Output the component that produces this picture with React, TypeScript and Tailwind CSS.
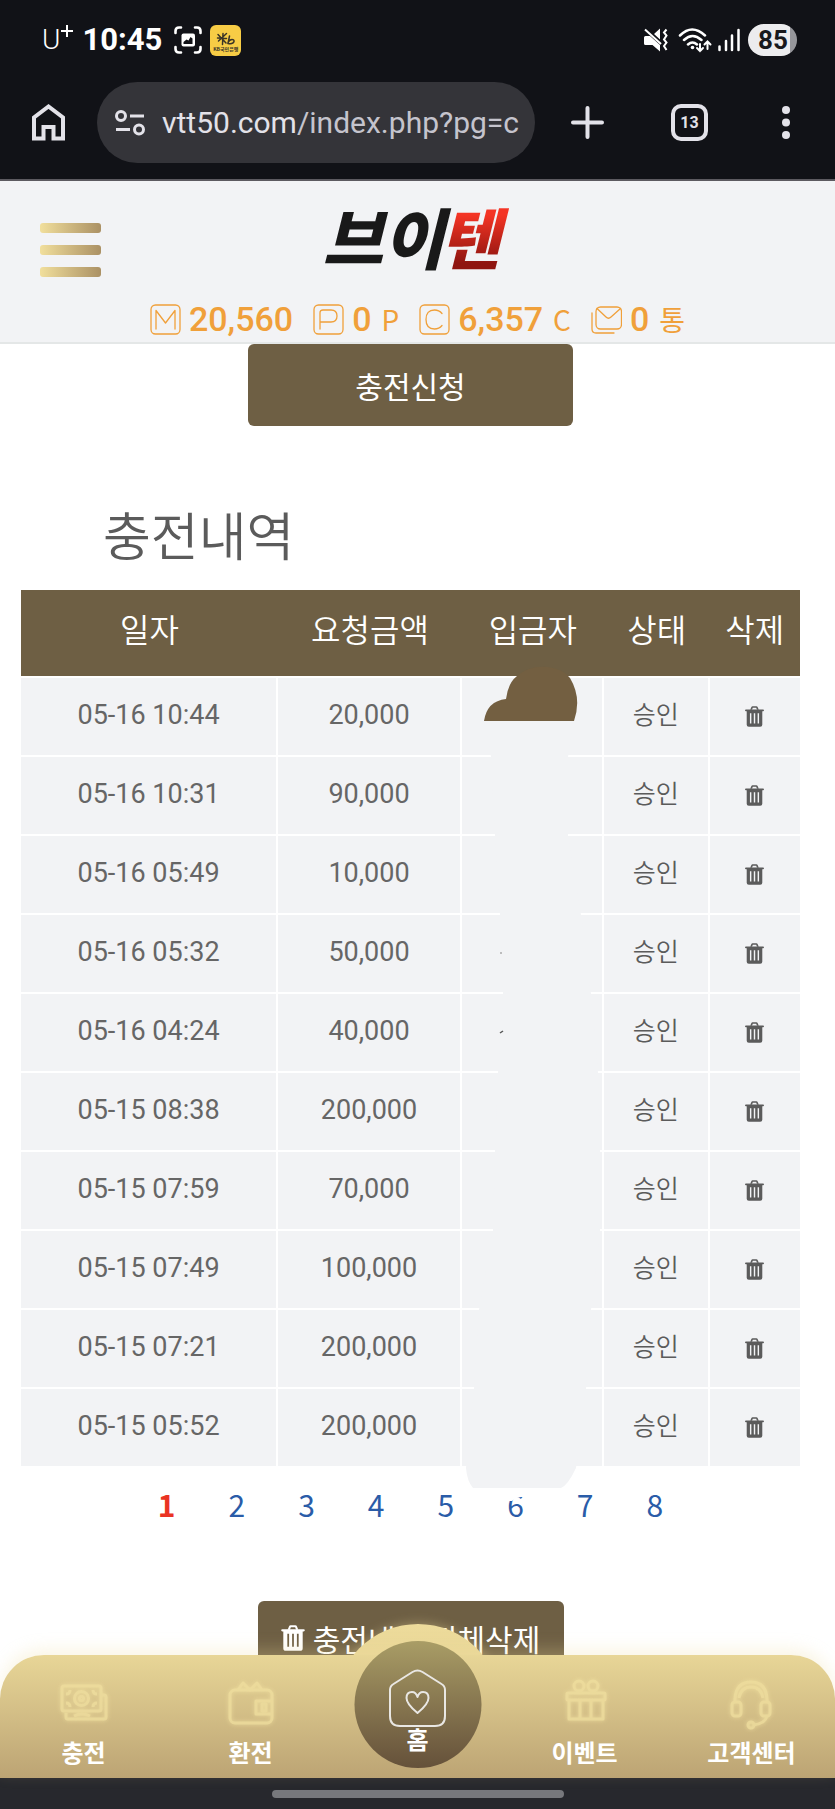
import { type ReactNode } from "react";

const rows = [
  { date: "05-16 10:44", amount: "20,000" },
  { date: "05-16 10:31", amount: "90,000" },
  { date: "05-16 05:49", amount: "10,000" },
  { date: "05-16 05:32", amount: "50,000" },
  { date: "05-16 04:24", amount: "40,000" },
  { date: "05-15 08:38", amount: "200,000" },
  { date: "05-15 07:59", amount: "70,000" },
  { date: "05-15 07:49", amount: "100,000" },
  { date: "05-15 07:21", amount: "200,000" },
  { date: "05-15 05:52", amount: "200,000" },
];

const pages = [1, 2, 3, 4, 5, 6, 7, 8];

const TrashIcon = ({ className }: { className: string }) => (
  <svg viewBox="0 0 20 22" className={className} fill="currentColor" aria-hidden="true">
    <path d="M5.500 4 6.600 1.200Q7 .3 8 .3h4q1 0 1.400.9L14.500 4h-1.900l-.8-2.100H8.200L7.400 4z" />
    <path d="M1 3.600h18q1 0 1 .9t-1 .9H1q-1 0-1-.9t1-.9z" />
    <path
      fillRule="evenodd"
      d="M1.800 5h16.400v14.600q0 2.200-2.200 2.200H4q-2.200 0-2.200-2.200zM5.200 7.500v10.800h1.500V7.500zm4.050 0v10.800h1.500V7.500zm4.050 0v10.800h1.500V7.500z"
    />
  </svg>
);

const StatusBar = () => (
  <div className="flex h-20 items-center pl-[42px] pr-[38px] text-white">
    <div className="flex items-start font-light">
      <span className="text-[28px] leading-8">U</span>
      <svg viewBox="0 0 14 14" className="size-[14px]" fill="none" stroke="currentColor" strokeWidth="2">
        <path d="M7 1v12M1 7h12" />
      </svg>
    </div>
    <span className="ml-2 text-[31px] font-bold leading-9">10:45</span>
    <svg viewBox="0 0 28 28" className="ml-3 size-7" fill="none" stroke="currentColor" strokeWidth="2.600" strokeLinecap="round">
      <path d="M1.500 7V5q0-3.500 3.500-3.500h2M21 1.500h2q3.500 0 3.500 3.500v2M26.500 21v2q0 3.500-3.500 3.500h-2M7 26.500H5q-3.500 0-3.500-3.500v-2" />
      <rect x="7.500" y="7.500" width="13.500" height="13" rx="2" fill="currentColor" stroke="none" />
      <path d="M9.500 18v-2l3-2.500 2 1 2-3.500 2 1.500V18z" fill="#111217" stroke="none" />
    </svg>
    <div className="ml-2 flex size-[31px] flex-col items-center justify-end rounded-md bg-[#f7cc45] pb-1 text-[#3a3427]">
      <svg viewBox="0 0 20 14" className="h-[14px] w-5" fill="none" stroke="currentColor" strokeWidth="1.500" strokeLinecap="round">
        <path d="M2 2.500 10 11M10.500 1.500 2.500 9M7 1.500 6.500 12.500M1.500 6l9 .5M13.500 4l-1.500 7.500q5 1 6-2 .3-2-2-2t-4 3" />
      </svg>
      <span className="font-['Noto_Sans_CJK_KR',sans-serif] text-[5px] leading-[6px] font-bold">KB국민은행</span>
    </div>
    <div className="ml-auto flex items-center">
      <svg viewBox="0 0 24 24" className="size-6" fill="currentColor">
        <path d="M0 9.500Q0 8 1.500 8H6l10 9v6.500L8.500 17h-7Q0 17 0 15.500zM10 6l6-5.500v11z" />
        <path d="M1 1.500 17 16" stroke="currentColor" strokeWidth="2" />
        <path d="m22.500 1.500-2.500 3 2.500 3-2.500 4 2.500 3-2.500 3.500 2.500 4" fill="none" stroke="currentColor" strokeWidth="2" />
      </svg>
      <svg viewBox="0 0 34 26" className="ml-[10px] h-[26px] w-[34px]" fill="none" stroke="currentColor" strokeWidth="2.500" strokeLinecap="round">
        <path d="M2 8.500Q14-3.500 27 8.500M6 13q8.500-8 17.500 0M10 17.500q4.500-4 9 0" />
        <circle cx="14.500" cy="20.500" r="1.800" fill="currentColor" stroke="none" />
        <path d="M22 17v7m-3-3 3 3 3-3M29.500 22v-7.500m-3 3 3-3 3 3" strokeWidth="2" />
      </svg>
      <svg viewBox="0 0 22 24" className="ml-[6px] h-6 w-[22px]" stroke="currentColor" strokeWidth="2.500" strokeLinecap="round">
        <path d="M1.500 18.500V22M8 13v9M14 7.500V22M20.500 2v20" />
      </svg>
      <div className="ml-2 flex h-8 w-[49px] items-center rounded-full bg-linear-to-r from-[#ececee] from-85% to-[#96969b] to-85% pl-[10px] text-[26px] font-bold leading-8 text-[#17181c]">
        85
      </div>
    </div>
  </div>
);

const BrowserBar = () => (
  <div className="flex h-[101px] items-start border-b-2 border-[#5c5a60] pt-[2px] pl-8 pr-[45px] text-[#e3e2e9]">
    <button aria-label="홈페이지" className="mt-[22px]">
      <svg viewBox="0 0 33 37" className="h-[37px] w-[33px]" fill="none" stroke="currentColor" strokeWidth="4">
        <path d="M2 34.500V13.500L16.500 2.500 31 13.500v21H21.500V23h-10v11.500z" />
      </svg>
    </button>
    <div className="ml-8 flex h-[81px] min-w-0 flex-1 items-center rounded-full bg-[#343439] pl-[18px] pr-4">
      <svg viewBox="0 0 30 26" className="h-[26px] w-[30px] shrink-0" fill="none" stroke="currentColor" strokeWidth="3">
        <circle cx="6" cy="6" r="4.500" />
        <circle cx="24" cy="19.500" r="4.500" />
        <path d="M15 6h14M1 19.500h14" />
      </svg>
      <div className="ml-[17px] overflow-hidden text-[30px] leading-10 whitespace-nowrap text-[#c5c4cd]">
        <span className="text-[#e3e2e9]">vtt50.com</span>/index.php?pg=c
      </div>
    </div>
    <button aria-label="새 탭" className="mt-6 ml-9">
      <svg viewBox="0 0 33 33" className="size-[33px]" stroke="currentColor" strokeWidth="4" strokeLinecap="round">
        <path d="M16.500 2v29M2 16.500h29" />
      </svg>
    </button>
    <button
      aria-label="탭 13개"
      className="mt-[22px] ml-[67px] flex size-[37px] items-center justify-center rounded-[10px] border-4 border-[#e3e2e9] text-base leading-none font-bold"
    >
      13
    </button>
    <button aria-label="메뉴" className="mt-6 ml-[74px]">
      <svg viewBox="0 0 8 33" className="h-[33px] w-2" fill="currentColor">
        <circle cx="4" cy="4" r="4" />
        <circle cx="4" cy="16.500" r="4" />
        <circle cx="4" cy="29" r="4" />
      </svg>
    </button>
  </div>
);

const BoxIcon = ({ children }: { children: ReactNode }) => (
  <svg viewBox="0 0 31 31" className="size-[31px]" fill="none" stroke="currentColor" strokeWidth="1.300" strokeLinecap="round" strokeLinejoin="round">
    {children}
  </svg>
);

const frame = <rect x="1" y="1" width="29" height="29" rx="4.500" />;

const stats = [
  { value: "20,560", unit: "", icon: <>{frame}<path d="M6 25V6.500L15.500 19 25 6.500V25" /></> },
  { value: "0", unit: "P", icon: <>{frame}<path d="M7 25V9q0-3 3-3h8q6 0 6 6t-6 6H7" /></> },
  { value: "6,357", unit: "C", icon: <>{frame}<path d="M23 9.500Q20 6 15.500 6 7 6 7 15.500T15.500 25q4.500 0 7.500-3.500" /></> },
  {
    value: "0",
    unit: "통",
    icon: (
      <>
        <rect x="5" y="3" width="25.500" height="22" rx="4.500" />
        <path d="M6 4.500 15 13q2.500 2.500 5 0l9.500-8.500M1 9v16q0 4 4 4h18" />
      </>
    ),
  },
];

const SiteHeader = () => (
  <header className="relative flex h-[163px] flex-col items-center border-b-2 border-[#e4e7e7] bg-[#f2f3f5]">
    <button aria-label="전체메뉴" className="absolute top-[42px] left-10 flex flex-col gap-3">
      <span className="h-[10px] w-[61px] rounded-[3px] bg-linear-to-r from-[#f1df9c] to-[#ab9164]" />
      <span className="h-[10px] w-[61px] rounded-[3px] bg-linear-to-r from-[#f1df9c] to-[#ab9164]" />
      <span className="h-[10px] w-[61px] rounded-[3px] bg-linear-to-r from-[#f1df9c] to-[#ab9164]" />
    </button>
    <a
      href="#"
      className="mt-[14px] flex pr-3 font-['Noto_Sans_CJK_KR',sans-serif] text-[66px] leading-20 font-black text-[#191919] italic"
    >
      브이
      <span className="-mr-3 -ml-1 bg-linear-to-b from-[#f43424] from-25% to-[#8f1510] to-85% bg-clip-text pr-3 text-transparent">텐</span>
    </a>
    <div className="mt-[24px] flex gap-5 text-[#f0a03a]">
      {stats.map((stat, i) => (
        <div key={i} className="flex h-10 items-center gap-2">
          <BoxIcon>{stat.icon}</BoxIcon>
          <div className="flex items-baseline gap-[10px]">
            <span className="text-[34px] leading-10 font-medium">{stat.value}</span>
            {stat.unit && (
              <span className="font-['Noto_Sans_CJK_KR',sans-serif] text-[28px] leading-8">{stat.unit}</span>
            )}
          </div>
        </div>
      ))}
    </div>
  </header>
);

// brush strokes that hide the depositor names
const NameMask = () => (
  <svg viewBox="0 0 142 840" className="pointer-events-none absolute -top-[12px] left-0 h-[840px] w-[142px]" aria-hidden="true">
    <path
      d="M24 60 29 91 33 170 38 249 41 328 36 407 33 486 31 565 17 644 12 723 4 802Q5 815 11 822H99Q106 819 114 802L124 723 129 644 138 565V486L136 407 129 328 119 249 106 170V91L112 55z"
      fill="#f2f3f5"
    />
    <path d="M22 55Q25 35 44 33 46 17 55 10 68-1 86 1 101 3 108 12 120 32 112 55z" fill="#735f41" />
    <path d="M42 822H66V831Q56 830 50 835H42z" fill="#fff" />
    <circle cx="39" cy="287" r="1" fill="#aaa" />
    <path d="m38 367 3-2" stroke="#555" strokeWidth="1.500" />
  </svg>
);

const HistoryTable = () => (
  <table className="w-full table-fixed border-separate border-spacing-0 text-center text-[#5b5b5b]">
    <colgroup>
      <col className="w-[33%]" />
      <col className="w-[23.600%]" />
      <col className="w-[18.200%]" />
      <col className="w-[13.600%]" />
      <col className="w-[11.600%]" />
    </colgroup>
    <thead className="bg-[#6e5f44] font-['Noto_Sans_CJK_KR',sans-serif] text-[32px] text-white">
      <tr>
        {["일자", "요청금액", "입금자", "상태", "삭제"].map((name) => (
          <th key={name} scope="col" className="h-[88px] border-b-2 border-white pb-[10px] font-[350]">
            {name}
          </th>
        ))}
      </tr>
    </thead>
    <tbody className="bg-[#f2f3f5] text-[27px]">
      {rows.map((row, i) => (
        <tr key={row.date}>
          <td className="h-[79px] border-r-2 border-b-2 border-white pb-[2px] font-normal text-[#666666]">{row.date}</td>
          <td className="border-r-2 border-b-2 border-white pb-[2px] font-normal text-[#666666]">{row.amount}</td>
          {i === 0 ? (
            <td className="relative border-r-2 border-b-2 border-white">
              <NameMask />
            </td>
          ) : (
            <td className="border-r-2 border-b-2 border-white" />
          )}
          <td className="border-r-2 border-b-2 border-white pb-[6px] font-['Noto_Sans_CJK_KR',sans-serif] text-[25px] font-[350]">
            승인
          </td>
          <td className="border-b-2 border-white">
            <button aria-label={`${row.date} 삭제`} className="mx-auto block">
              <TrashIcon className="h-[21px] w-[19px]" />
            </button>
          </td>
        </tr>
      ))}
    </tbody>
  </table>
);

const menu = [
  {
    name: "충전",
    icon: (
      <>
        <path d="M42 13h3q2 0 2 2v20q0 2-2 2H9q-2 0-2-2v-4" />
        <rect x="3" y="4" width="39" height="25" rx="2" />
        <circle cx="22.500" cy="16.500" r="7" />
        <circle cx="22.500" cy="16.500" r="2" />
        <path d="M7 12q4 0 4-4M38 12q-4 0-4-4M7 21q4 0 4 4M38 21q-4 0-4 4M15 34q8-4 16 0" />
      </>
    ),
  },
  {
    name: "환전",
    icon: (
      <>
        <rect x="4" y="8" width="42" height="33" rx="5" />
        <path d="M12 8 17 1l7 7 7-7 5 7M46 19H30v13h16" />
        <path d="M36 22h4v7h-4z" />
      </>
    ),
  },
  { name: "홈", icon: null },
  {
    name: "이벤트",
    icon: (
      <>
        <rect x="7" y="11" width="38" height="7" rx="1" />
        <path d="M9 18v19h34V18M20 18v19M31 18v19" />
        <circle cx="19" cy="4" r="5" />
        <circle cx="33" cy="4" r="5" />
      </>
    ),
  },
  {
    name: "고객센터",
    icon: (
      <>
        <path d="M8 20V17Q9 0 24 0t16 17v3M12 16Q14 5 24 5t12 11M40 34q-2 8-14 9" />
        <rect x="5" y="20" width="9" height="14" rx="3" />
        <rect x="34" y="20" width="9" height="14" rx="3" />
        <circle cx="24" cy="43" r="3" />
      </>
    ),
  },
];

const BottomMenu = () => (
  <nav className="relative z-10 h-[123px] shrink-0 font-['Noto_Sans_CJK_KR',sans-serif] text-2xl leading-8 font-bold text-white">
    <span className="absolute -top-[31px] left-1/2 h-[83px] w-[166px] -translate-x-1/2 rounded-t-full bg-linear-to-b from-[#eddb9b] to-[#e4d294] shadow-[0_0_12px_#eddb9b66]" />
    <div className="relative grid h-full grid-cols-5 rounded-t-[44px] bg-linear-to-b from-[#e8d697] to-[#bca474] shadow-[0_-6px_16px_#eddb9b44]">
      {menu.map((item) =>
        item.icon ? (
          <a key={item.name} href="#" className="flex flex-col items-center justify-end pb-[10px]">
            <svg
              viewBox="-2 -6 54 54"
              className="mb-[6px] size-[54px] text-[#f0df9f] opacity-80 drop-shadow-[0_0_2px_#f0df9f]"
              fill="none"
              stroke="currentColor"
              strokeWidth="3"
              strokeLinejoin="round"
            >
              {item.icon}
            </svg>
            {item.name}
          </a>
        ) : (
          <div key={item.name} className="relative">
            <a
              href="#"
              className="absolute -top-[14px] left-1/2 flex size-[127px] -translate-x-1/2 flex-col items-center rounded-full bg-linear-to-b from-[#a99d66] to-[#65513a] pt-[28px]"
            >
              <svg viewBox="0 0 58 58" className="size-[58px] shrink-0" fill="none" stroke="#e9e7e3" strokeWidth="2" strokeLinejoin="round">
                <path d="M1.500 21q0-4 3.500-6L24 3q5-3 10 0l19 12q3.500 2 3.500 6v26q0 10-10 10h-35q-10 0-10-10z" transform="translate(0 0)" />
                <path d="M29 44Q18 35 18 29q0-6 5.500-6 4 0 5.500 5 1.500-5 5.500-5 5.500 0 5.500 6 0 6-11 15z" />
              </svg>
              <span className="leading-6">{item.name}</span>
            </a>
          </div>
        )
      )}
    </div>
  </nav>
);

export default function App() {
  return (
    <div className="flex h-screen flex-col overflow-hidden bg-white font-[Roboto,'Noto_Sans_CJK_KR',sans-serif]">
      <div className="shrink-0 bg-[#111217]">
        <StatusBar />
        <BrowserBar />
      </div>
      <div className="shrink-0">
        <SiteHeader />
      </div>

      <main className="flex min-h-0 flex-1 flex-col items-center overflow-hidden pr-[35px] pl-[21px]">
        <button className="h-[82px] w-[325px] shrink-0 rounded-md bg-[#6e5f44] font-['Noto_Sans_CJK_KR',sans-serif] text-[30px] text-white">
          충전신청
        </button>

        <h1 className="mt-[76px] mb-6 w-full pl-[82px] font-['Noto_Sans_CJK_KR',sans-serif] text-[52px] leading-16 font-[350] text-[#5b5b5b]">
          충전내역
        </h1>
        <HistoryTable />

        {/* Pagination */}
        <div className="mt-[14px] flex gap-[53px] font-['Noto_Sans_CJK_KR',sans-serif] text-[30px] leading-11 text-[#2a5ca8]">
          {pages.map((page) => (
            <a key={page} href="#" className={page === 1 ? "font-bold text-[#ea3323]" : ""}>
              {page}
            </a>
          ))}
        </div>

        <button className="mt-[75px] flex h-[82px] w-[306px] shrink-0 items-center justify-center gap-2 rounded-md bg-[#6e5f44] pb-2 font-['Noto_Sans_CJK_KR',sans-serif] text-[30px] whitespace-nowrap text-white">
          <TrashIcon className="h-[26px] w-6" />
          충전내역 전체삭제
        </button>
      </main>

      <BottomMenu />
      <div className="flex h-[31px] shrink-0 items-center justify-center bg-[#27282d]">
        <span className="h-2 w-[292px] rounded-full bg-[#77787c]" />
      </div>
    </div>
  );
}
